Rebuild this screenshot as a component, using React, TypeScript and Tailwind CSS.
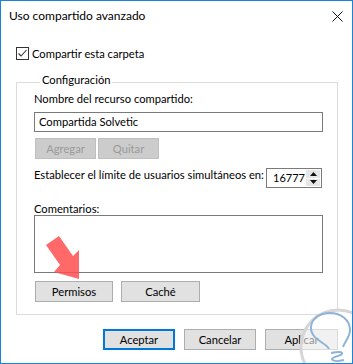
import React from "react";

const Btn = ({
  label,
  className = "",
}: {
  label: string;
  className?: string;
}) => (
  <div
    className={`h-[21px] flex items-center justify-center bg-[#e1e1e1] border border-[#adadad] text-black ${className}`}
  >
    {label}
  </div>
);

const DisabledBtn = ({ label }: { label: string }) => (
  <div className="h-[21px] w-[61px] flex items-center justify-center bg-[#cccccc] border border-[#bfbfbf] text-[#9a9a9a]">
    {label}
  </div>
);

export default function App() {
  return (
    <div
      className="relative w-[353px] h-[364px] border border-[#1883d7] bg-white text-black text-[11.2px] leading-[16px] overflow-hidden"
      style={{ fontFamily: "Lato, 'Noto Sans', sans-serif" }}
    >
      {/* barra de título */}
      <div className="h-[30px] flex items-center justify-between pl-[8px] pr-[9px]">
        <span className="text-[12px]">Uso compartido avanzado</span>
        <svg width="11" height="11" viewBox="0 0 11 11">
          <path d="M0.5 0.5 L10.5 10.5 M10.5 0.5 L0.5 10.5" stroke="#111" strokeWidth="1" />
        </svg>
      </div>

      <div className="pl-[15px] pr-[14px]">
        {/* check */}
        <div className="mt-[16px] h-[13px] flex items-center gap-[3px]">
          <div className="w-[13px] h-[13px] border border-[#333] bg-white flex items-center justify-center">
            <svg width="11" height="11" viewBox="0 0 11 11">
              <path d="M1.5 5.5 L4 8 L9.5 2" fill="none" stroke="#333" strokeWidth="1.1" />
            </svg>
          </div>
          <span>Compartir esta carpeta</span>
        </div>

        {/* grupo Configuración */}
        <fieldset className="mt-[14px] border border-[#dcdcdc] pl-[17px] pr-[14px] pt-[1px] pb-[12px]">
          <legend className="ml-[6px] px-[2px] leading-[16px]">
            <span className="relative -top-[2px]">Configuración</span>
          </legend>

          <div>Nombre del recurso compartido:</div>
          <div className="mt-[5px] h-[20px] border border-[#7a7a7a] bg-white flex items-center pl-[4px]">
            Compartida Solvetic
          </div>

          <div className="mt-[6px] flex gap-[2px] pl-[1px]">
            <DisabledBtn label="Agregar" />
            <DisabledBtn label="Quitar" />
          </div>

          <div className="mt-[9px] flex items-start justify-between">
            <span className="-mt-[1px] whitespace-nowrap">
              Establecer el límite de usuarios simultáneos en:
            </span>
            <div className="mr-[1px] w-[56px] h-[20px] border border-[#7a7a7a] bg-white flex">
              <div className="flex-1 whitespace-nowrap pl-[6px] leading-[18px] text-[11px]">
                16777
              </div>
              <div className="w-[14px] my-[1px] mr-[1px] flex flex-col gap-[1px]">
                <div className="flex-1 bg-[#e6e6e6] flex items-center justify-center">
                  <svg width="7" height="4" viewBox="0 0 7 4">
                    <path d="M0 4 L3.5 0 L7 4 Z" fill="#111" />
                  </svg>
                </div>
                <div className="flex-1 bg-[#e6e6e6] flex items-center justify-center">
                  <svg width="7" height="4" viewBox="0 0 7 4">
                    <path d="M0 0 L3.5 4 L7 0 Z" fill="#111" />
                  </svg>
                </div>
              </div>
            </div>
          </div>

          <div className="mt-[14px] leading-[13px]">Comentarios:</div>
          <div className="h-[58px] border border-[#7a7a7a] bg-white" />

          <div className="mt-[8px] flex gap-[8px] pl-[1px]">
            <Btn label="Permisos" className="w-[78px]" />
            <Btn label="Caché" className="w-[79px]" />
          </div>
        </fieldset>

        {/* botones inferiores */}
        <div className="mt-[14px] flex justify-end gap-[9px]">
          <div className="w-[72px] h-[21px] flex items-center justify-center bg-[#e1e1e1] border-2 border-[#0078d7]">
            Aceptar
          </div>
          <Btn label="Cancelar" className="w-[72px]" />
          <Btn label="Aplicar" className="w-[73px]" />
        </div>
      </div>

      {/* flecha y marca de agua */}
      <svg
        className="absolute -top-px -left-px pointer-events-none"
        width="353"
        height="364"
        viewBox="0 0 353 364"
      >
        <polygon
          points="46,245 59,236 73,256 79,250 79,279 54,272 60,265"
          fill="#ff4f4f"
          fillOpacity="0.85"
        />
        <circle cx="338" cy="347" r="37" fill="#ffffff" fillOpacity="0.55" stroke="#d6d6d6" strokeWidth="3" />
        <path
          d="M329 349 C327 343 311 340 311 328 C311 318 320 313 330 313 C341 313 350 320 350 330 C350 337 345 341 343 347"
          fill="none"
          stroke="#8fb3d9"
          strokeWidth="2"
        />
        <path
          d="M331 353 C336 352 341 351 342 353 C343 356 333 356 332 359 C333 362 340 361 344 360"
          fill="none"
          stroke="#8fb3d9"
          strokeWidth="2"
        />
      </svg>
    </div>
  );
}
